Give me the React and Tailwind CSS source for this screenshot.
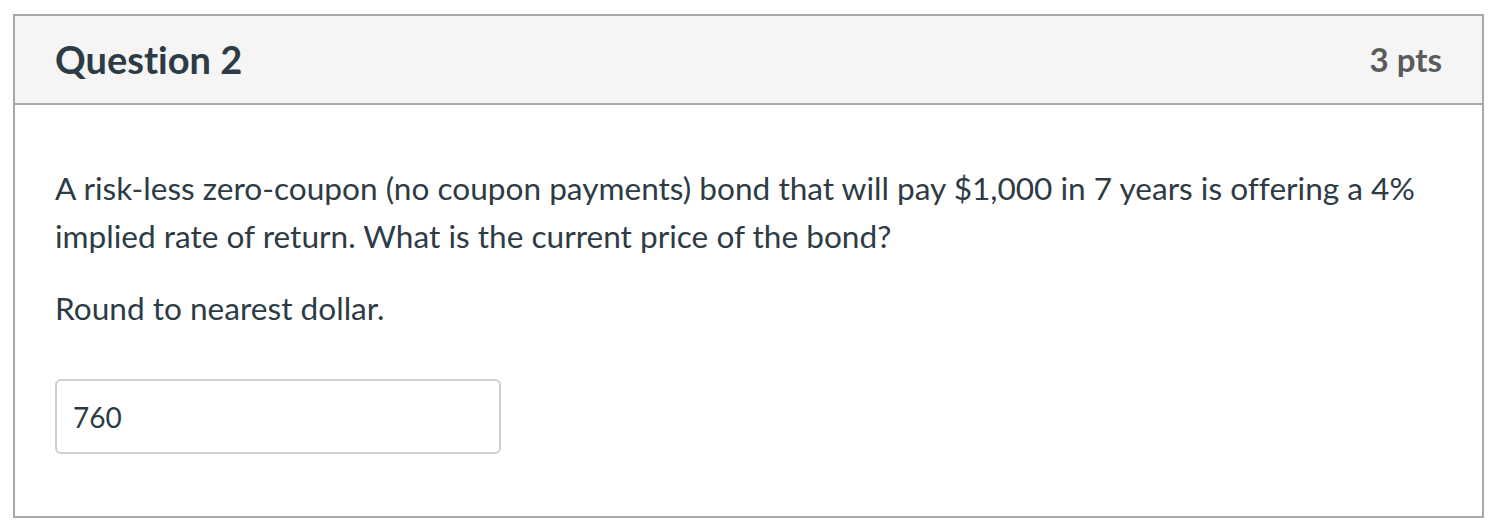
import React from 'react';

const QuizQuestion = () => {
    return (
        <div className="min-h-screen bg-white pt-[14px] pl-[13px] font-['Lato',sans-serif] [font-variant-ligatures:none]">
            <div className="w-[1471px] h-[504px] border-2 border-[#a8a8a8] flex flex-col">
                <div className="h-[89px] bg-[#f5f5f5] border-b-2 border-[#a8a8a8] flex items-center justify-between px-[40px]">
                    <h2 className="text-[38px] font-bold text-[#2d3b45]">Question 2</h2>
                    <span className="text-[33px] font-bold text-[#5b5b5b]">3 pts</span>
                </div>
                <div className="px-[40px] pt-[59px] text-[#2d3b45]">
                    <p className="text-[31.6px] leading-[48px]">
                        A risk-less zero-coupon (no coupon payments) bond that will pay $1,000 in 7 years is offering a 4% implied rate of return. What is the current price of the bond?
                    </p>
                    <p className="text-[31.6px] leading-[48px] mt-[24px]">Round to nearest dollar.</p>
                    <div className="mt-[47px] w-[446px] h-[75px] border-2 border-[#cdcfd1] rounded-[6px] flex items-center px-[16px]">
                        <span className="text-[28px] text-[#2d3b45]">760</span>
                    </div>
                </div>
            </div>
        </div>
    );
};

export default QuizQuestion;
